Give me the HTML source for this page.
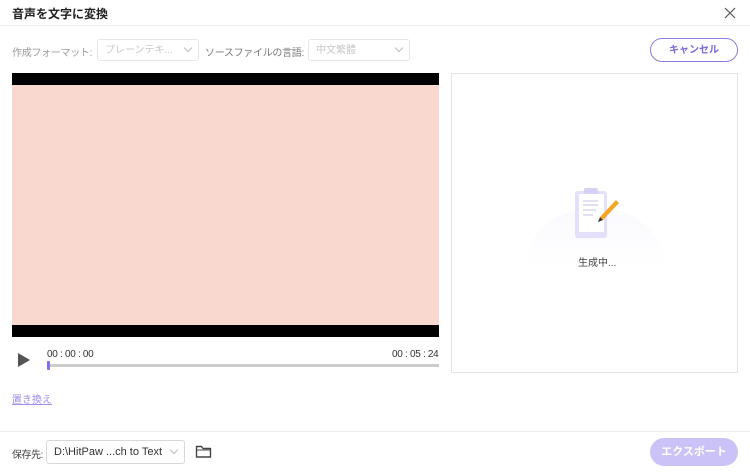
<!DOCTYPE html>
<html><head><meta charset="utf-8"><style>
*{margin:0;padding:0;box-sizing:border-box}
body{width:750px;height:473px;background:#fff;font-family:"Liberation Sans","Noto Sans CJK JP",sans-serif;position:relative;overflow:hidden;color:#333}
.a{position:absolute;white-space:nowrap}
.sel{position:absolute;height:22px;border:1px solid #e6e6e6;border-radius:3px;font-size:10px;color:#c8c8c8;padding:0 7px;line-height:21px}
.chev{position:absolute;right:7px;top:5px;width:6px;height:6px;border-right:1px solid #bbb;border-bottom:1px solid #bbb;transform:rotate(45deg)}
</style></head><body>
<div class="a" style="left:12px;top:5px;font-size:12px;font-weight:bold;color:#222">音声を文字に変換</div>
<svg class="a" style="left:724px;top:7px" width="12" height="12"><path d="M1 1L11 11M11 1L1 11" stroke="#555" stroke-width="1.2"/></svg>
<div class="a" style="left:0;top:25px;width:750px;height:1px;background:#ececec"></div>
<div class="a" style="left:12px;top:44px;font-size:10px;color:#999;letter-spacing:-0.3px">作成フォーマット:</div>
<div class="sel" style="left:97px;top:39px;width:102px">プレーンテキ...<span class="chev"></span></div>
<div class="a" style="left:205px;top:44px;font-size:10px;color:#777;letter-spacing:-0.3px">ソースファイルの言語:</div>
<div class="sel" style="left:308px;top:39px;width:102px">中文繁體<span class="chev"></span></div>
<div class="a" style="left:650px;top:38px;width:88px;height:24px;border:1.5px solid #8b7ee0;border-radius:12px;color:#7a6bd8;font-size:10px;font-weight:bold;text-align:center;line-height:23px">キャンセル</div>
<div class="a" style="left:12px;top:73px;width:427px;height:264px;background:#000"></div>
<div class="a" style="left:12px;top:85px;width:427px;height:240px;background:#f9d9cf"></div>
<div class="a" style="left:451px;top:73px;width:287px;height:300px;border:1px solid #e4e4e4"></div>
<div class="a" style="left:525px;top:210px;width:140px;height:60px;border-radius:70px 70px 0 0;background:linear-gradient(#fafaff,#fff)"></div>
<svg class="a" style="left:570px;top:184px" width="55" height="60">
<rect x="5" y="7" width="32" height="47" rx="3" fill="#e4e0fb"/>
<rect x="9" y="10" width="25" height="38" fill="#fff"/>
<rect x="14" y="4" width="14" height="6" rx="2" fill="#d6d1f5"/>
<path d="M13 17h15M13 21h15M13 26h13M13 31h10" stroke="#d0cce8" stroke-width="1.2"/>
<path d="M30 33L46 16l3 3L33 36z" fill="#f5a623"/><path d="M30 33l-2 5 5-2z" fill="#333"/>
</svg>
<div class="a" style="left:578px;top:254px;font-size:10px;color:#444">生成中...</div>
<svg class="a" style="left:18px;top:353px" width="12" height="14"><path d="M0 0L12 7L0 14z" fill="#555"/></svg>
<div class="a" style="left:47px;top:349px;font-size:10px;color:#333;letter-spacing:-0.3px">00 : 00 : 00</div>
<div class="a" style="left:392px;top:349px;font-size:10px;color:#333;letter-spacing:-0.3px">00 : 05 : 24</div>
<div class="a" style="left:47px;top:364px;width:392px;height:3px;background:#ccc"></div>
<div class="a" style="left:47px;top:361px;width:3px;height:9px;background:#7f6df0;border-radius:1px"></div>
<div class="a" style="left:12px;top:391px;font-size:10px;color:#9d90ee;text-decoration:underline">置き換え</div>
<div class="a" style="left:0;top:431px;width:750px;height:1px;background:#ececec"></div>
<div class="a" style="left:12px;top:446px;font-size:10px;color:#444;letter-spacing:-0.5px">保存先:</div>
<div class="a" style="left:46px;top:440px;width:139px;height:24px;border:1px solid #d8d8d8;border-radius:3px;font-size:11px;color:#333;padding:0 7px;line-height:22px">D:\HitPaw ...ch to Text<span class="chev" style="top:6px"></span></div>
<svg class="a" style="left:195px;top:444px" width="17" height="15"><path d="M1.5 2.5h5l1.5 2h7.5v8.5h-14z" fill="none" stroke="#444" stroke-width="1.4" stroke-linejoin="round"/><path d="M2 6h13" stroke="#444" stroke-width="1"/></svg>
<div class="a" style="left:650px;top:438px;width:88px;height:28px;border-radius:14px;background:#cbc3f8;color:#fff;font-size:11px;font-weight:bold;text-align:center;line-height:28px">エクスポート</div>
</body></html>
